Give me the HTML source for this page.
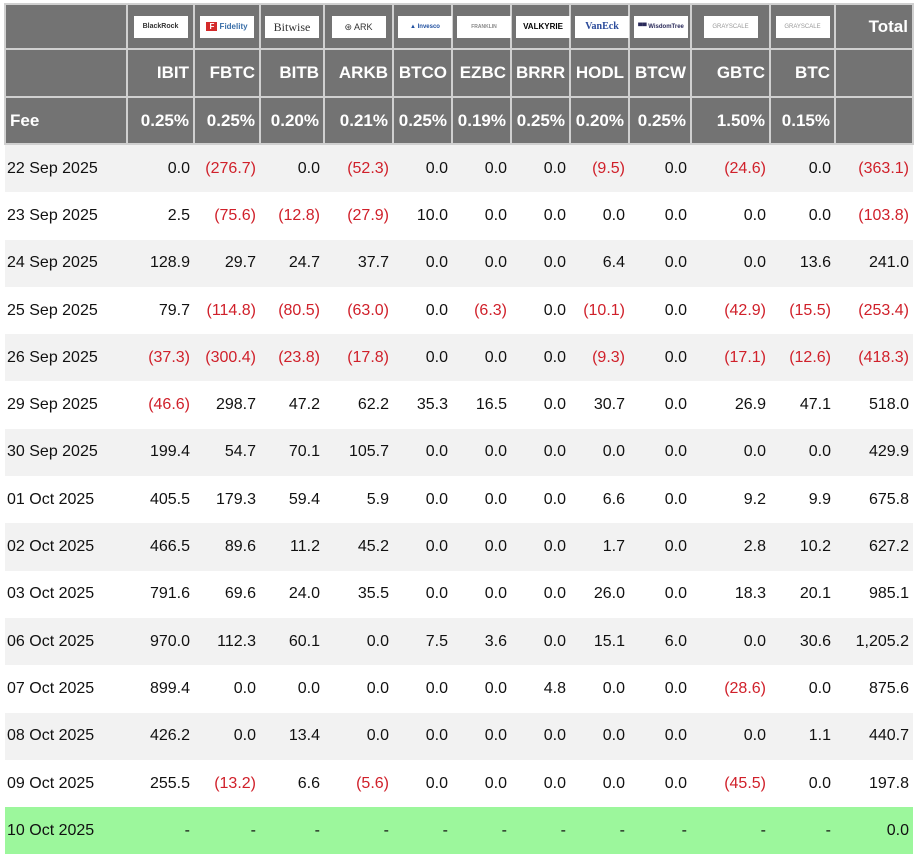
<!DOCTYPE html>
<html><head><meta charset="utf-8"><style>
body{margin:0;background:#fff;font-family:"Liberation Sans",Arial,sans-serif;}
table{position:absolute;left:4px;top:3px;border-collapse:collapse;table-layout:fixed;width:908px;font-size:16px;}
td{padding:0 4px;text-align:right;white-space:nowrap;color:#111;}
tr.h td{background:#737373;color:#fff;font-weight:bold;border:2px solid #d0d0d0;font-size:17px;}
tr.h1 td{height:43px;}
tr.h2 td{height:46px;}
tr.h3 td{height:45px;}
tr.d td{height:47.3px;}
tr.d:nth-child(even) td{background:#f2f2f2;}
tr.d td:first-child{text-align:left;padding-left:2px;}
tr.h td:first-child{text-align:left;}
.n{color:#d0202a;}
tr.d.g td{background:#9cf79c;height:47px;}
.logo{display:inline-block;background:#fff;width:54px;height:22px;vertical-align:middle;font-size:8px;color:#333;line-height:22px;text-align:center;font-weight:bold;overflow:hidden;}
tr.h1 td{text-align:center;}
</style></head><body>
<table>
<colgroup><col style="width:122px"><col style="width:67px"><col style="width:66px"><col style="width:64px"><col style="width:69px"><col style="width:59px"><col style="width:59px"><col style="width:59px"><col style="width:59px"><col style="width:62px"><col style="width:79px"><col style="width:65px"><col style="width:78px"></colgroup>
<tr class="h h1"><td></td>
<td><span class="logo" style="font-size:7px">BlackRock</span></td>
<td><span class="logo" style="color:#3a6fa8"><span style="background:#d42a2a;color:#fff;padding:0 3px">F</span> Fidelity</span></td>
<td><span class="logo" style="font-family:'Liberation Serif',serif;font-size:12px;font-weight:normal">Bitwise</span></td>
<td><span class="logo" style="font-weight:normal;font-size:9px">⊛ ARK</span></td>
<td><span class="logo" style="color:#2050a0;font-size:6px">▲ Invesco</span></td>
<td><span class="logo" style="font-size:5px;color:#888">FRANKLIN</span></td>
<td><span class="logo" style="font-size:8px;color:#000">VALKYRIE</span></td>
<td><span class="logo" style="font-family:'Liberation Serif',serif;color:#2a4a9a;font-size:10px">VanEck</span></td>
<td><span class="logo" style="color:#2a2a5a;font-size:6px">▀▀ WisdomTree</span></td>
<td><span class="logo" style="color:#999;font-size:6px;font-weight:normal">GRAYSCALE</span></td>
<td><span class="logo" style="color:#999;font-size:6px;font-weight:normal">GRAYSCALE</span></td>
<td style="text-align:right">Total</td></tr>
<tr class="h h2"><td></td><td>IBIT</td><td>FBTC</td><td>BITB</td><td>ARKB</td><td>BTCO</td><td>EZBC</td><td>BRRR</td><td>HODL</td><td>BTCW</td><td>GBTC</td><td>BTC</td><td></td></tr>
<tr class="h h3"><td>Fee</td><td>0.25%</td><td>0.25%</td><td>0.20%</td><td>0.21%</td><td>0.25%</td><td>0.19%</td><td>0.25%</td><td>0.20%</td><td>0.25%</td><td>1.50%</td><td>0.15%</td><td></td></tr>
<tr class="d"><td>22 Sep 2025</td><td>0.0</td><td class="n">(276.7)</td><td>0.0</td><td class="n">(52.3)</td><td>0.0</td><td>0.0</td><td>0.0</td><td class="n">(9.5)</td><td>0.0</td><td class="n">(24.6)</td><td>0.0</td><td class="n">(363.1)</td></tr>
<tr class="d"><td>23 Sep 2025</td><td>2.5</td><td class="n">(75.6)</td><td class="n">(12.8)</td><td class="n">(27.9)</td><td>10.0</td><td>0.0</td><td>0.0</td><td>0.0</td><td>0.0</td><td>0.0</td><td>0.0</td><td class="n">(103.8)</td></tr>
<tr class="d"><td>24 Sep 2025</td><td>128.9</td><td>29.7</td><td>24.7</td><td>37.7</td><td>0.0</td><td>0.0</td><td>0.0</td><td>6.4</td><td>0.0</td><td>0.0</td><td>13.6</td><td>241.0</td></tr>
<tr class="d"><td>25 Sep 2025</td><td>79.7</td><td class="n">(114.8)</td><td class="n">(80.5)</td><td class="n">(63.0)</td><td>0.0</td><td class="n">(6.3)</td><td>0.0</td><td class="n">(10.1)</td><td>0.0</td><td class="n">(42.9)</td><td class="n">(15.5)</td><td class="n">(253.4)</td></tr>
<tr class="d"><td>26 Sep 2025</td><td class="n">(37.3)</td><td class="n">(300.4)</td><td class="n">(23.8)</td><td class="n">(17.8)</td><td>0.0</td><td>0.0</td><td>0.0</td><td class="n">(9.3)</td><td>0.0</td><td class="n">(17.1)</td><td class="n">(12.6)</td><td class="n">(418.3)</td></tr>
<tr class="d"><td>29 Sep 2025</td><td class="n">(46.6)</td><td>298.7</td><td>47.2</td><td>62.2</td><td>35.3</td><td>16.5</td><td>0.0</td><td>30.7</td><td>0.0</td><td>26.9</td><td>47.1</td><td>518.0</td></tr>
<tr class="d"><td>30 Sep 2025</td><td>199.4</td><td>54.7</td><td>70.1</td><td>105.7</td><td>0.0</td><td>0.0</td><td>0.0</td><td>0.0</td><td>0.0</td><td>0.0</td><td>0.0</td><td>429.9</td></tr>
<tr class="d"><td>01 Oct 2025</td><td>405.5</td><td>179.3</td><td>59.4</td><td>5.9</td><td>0.0</td><td>0.0</td><td>0.0</td><td>6.6</td><td>0.0</td><td>9.2</td><td>9.9</td><td>675.8</td></tr>
<tr class="d"><td>02 Oct 2025</td><td>466.5</td><td>89.6</td><td>11.2</td><td>45.2</td><td>0.0</td><td>0.0</td><td>0.0</td><td>1.7</td><td>0.0</td><td>2.8</td><td>10.2</td><td>627.2</td></tr>
<tr class="d"><td>03 Oct 2025</td><td>791.6</td><td>69.6</td><td>24.0</td><td>35.5</td><td>0.0</td><td>0.0</td><td>0.0</td><td>26.0</td><td>0.0</td><td>18.3</td><td>20.1</td><td>985.1</td></tr>
<tr class="d"><td>06 Oct 2025</td><td>970.0</td><td>112.3</td><td>60.1</td><td>0.0</td><td>7.5</td><td>3.6</td><td>0.0</td><td>15.1</td><td>6.0</td><td>0.0</td><td>30.6</td><td>1,205.2</td></tr>
<tr class="d"><td>07 Oct 2025</td><td>899.4</td><td>0.0</td><td>0.0</td><td>0.0</td><td>0.0</td><td>0.0</td><td>4.8</td><td>0.0</td><td>0.0</td><td class="n">(28.6)</td><td>0.0</td><td>875.6</td></tr>
<tr class="d"><td>08 Oct 2025</td><td>426.2</td><td>0.0</td><td>13.4</td><td>0.0</td><td>0.0</td><td>0.0</td><td>0.0</td><td>0.0</td><td>0.0</td><td>0.0</td><td>1.1</td><td>440.7</td></tr>
<tr class="d"><td>09 Oct 2025</td><td>255.5</td><td class="n">(13.2)</td><td>6.6</td><td class="n">(5.6)</td><td>0.0</td><td>0.0</td><td>0.0</td><td>0.0</td><td>0.0</td><td class="n">(45.5)</td><td>0.0</td><td>197.8</td></tr>
<tr class="d g"><td>10 Oct 2025</td><td>-</td><td>-</td><td>-</td><td>-</td><td>-</td><td>-</td><td>-</td><td>-</td><td>-</td><td>-</td><td>-</td><td>0.0</td></tr>
</table>
</body></html>
